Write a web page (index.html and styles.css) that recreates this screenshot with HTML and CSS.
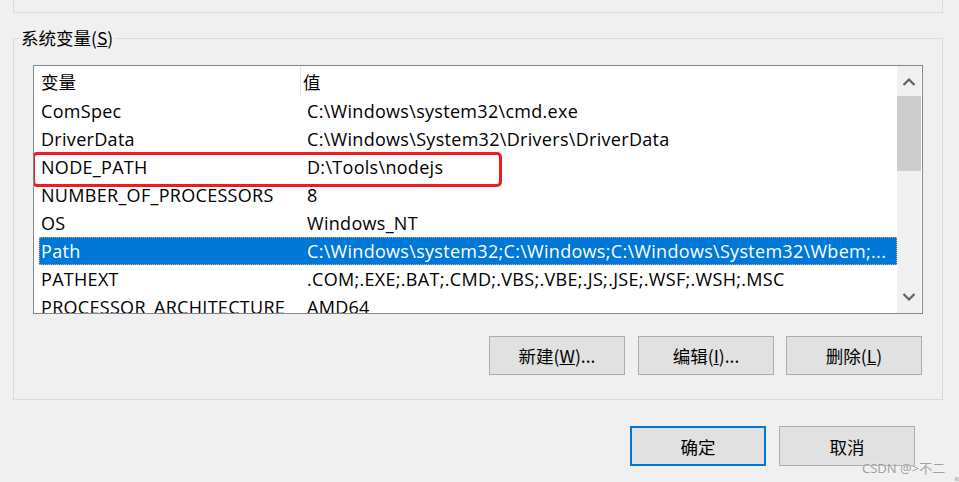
FILE: index.html
```html
<!DOCTYPE html>
<html lang="zh-CN">
<head>
<meta charset="utf-8">
<link rel="stylesheet" href="styles.css">
</head>
<body>
<div class="page">
  <div class="top-group"></div>
  <div class="group">
    <span class="legend">系统变量(<u>S</u>)</span>
    <div class="listbox">
      <div class="list">
        <div class="header">
          <div class="hcell c1">变量</div>
          <div class="hcell c2">值</div>
        </div>
        <div class="rows">
          <div class="row"><span class="c1">ComSpec</span><span class="c2">C:\Windows\system32\cmd.exe</span></div>
          <div class="row"><span class="c1">DriverData</span><span class="c2">C:\Windows\System32\Drivers\DriverData</span></div>
          <div class="row"><span class="c1">NODE_PATH</span><span class="c2">D:\Tools\nodejs</span></div>
          <div class="row"><span class="c1">NUMBER_OF_PROCESSORS</span><span class="c2">8</span></div>
          <div class="row"><span class="c1">OS</span><span class="c2">Windows_NT</span></div>
          <div class="row selected"><span class="c1">Path</span><span class="c2">C:\Windows\system32;C:\Windows;C:\Windows\System32\Wbem;...</span></div>
          <div class="row"><span class="c1">PATHEXT</span><span class="c2">.COM;.EXE;.BAT;.CMD;.VBS;.VBE;.JS;.JSE;.WSF;.WSH;.MSC</span></div>
          <div class="row"><span class="c1">PROCESSOR_ARCHITECTURE</span><span class="c2">AMD64</span></div>
        </div>
        <div class="highlight-box"></div>
      </div>
      <div class="scrollbar">
        <svg class="arrow" width="24" height="30" viewBox="0 0 24 30"><path d="M6.5 19 L12 13.5 L17.5 19" fill="none" stroke="#606060" stroke-width="2.2"/></svg>
        <div class="thumb"></div>
        <div class="track"></div>
        <svg class="arrow" width="24" height="30" viewBox="0 0 24 30"><path d="M6.5 11 L12 16.5 L17.5 11" fill="none" stroke="#606060" stroke-width="2.2"/></svg>
      </div>
    </div>
    <div class="actions">
      <button class="btn">新建(<u>W</u>)...</button>
      <button class="btn">编辑(<u>I</u>)...</button>
      <button class="btn">删除(<u>L</u>)</button>
    </div>
  </div>
  <div class="dialog-actions">
    <button class="btn btn-default">确定</button>
    <button class="btn">取消</button>
  </div>
  <div class="watermark">CSDN @&gt;不二</div>
  <div class="grip"></div>
</div>
</body>
</html>
```
FILE: styles.css
```css
* { box-sizing: border-box; }
html, body { margin: 0; padding: 0; }
body {
  background: #f0f0f0;
  font-family: "Open Sans", "Noto Sans CJK SC", sans-serif;
  font-size: 18px;
  color: #000;
}
.page {
  position: relative;
  width: 959px;
  height: 482px;
  overflow: hidden;
}
.top-group {
  margin-left: 13px;
  width: 930px;
  height: 13px;
  border: 1px solid #dcdcdc;
  border-top: none;
}
.group {
  position: relative;
  margin: 25px 0 0 13px;
  width: 930px;
  height: 362px;
  border: 1px solid #dcdcdc;
  padding: 26px 0 0 19px;
}
.legend {
  position: absolute;
  left: 5px;
  top: -13px;
  padding: 0 2px;
  background: #f0f0f0;
  line-height: 24px;
  font-family: "Noto Sans CJK SC", sans-serif;
  font-size: 17.5px;
}
.listbox {
  width: 890px;
  height: 249px;
  border: 1px solid #828790;
  background: #fff;
  display: flex;
}
.list {
  position: relative;
  flex: 1;
  overflow: hidden;
}
.header {
  display: flex;
  height: 31px;
  align-items: stretch;
  padding-left: 5px;
}
.hcell {
  display: flex;
  align-items: center;
  font-family: "Noto Sans CJK SC", sans-serif;
  font-size: 17.5px;
  line-height: 1;
}
.header .c1 {
  width: 262px;
  padding-left: 2px;
  border-right: 1px solid #e5e5e5;
}
.header .c2 { padding-left: 2px; }
.rows { padding-left: 5px; }
.row {
  display: flex;
  align-items: center;
  height: 28px;
  white-space: nowrap;
  border: 1px dotted transparent;
  letter-spacing: 0.3px;
}
.row .c1 { width: 267px; padding-left: 1px; }
.row .c2 { padding-left: 0; }
.row.selected {
  background: #0078d7;
  color: #fff;
  border-color: #e0a060;
}
.highlight-box {
  position: absolute;
  left: -2px;
  top: 86px;
  width: 470px;
  height: 35px;
  border: 3px solid #f21b1b;
  border-radius: 5px;
}
.scrollbar {
  width: 24px;
  margin-right: 1px;
  background: #f0f0f0;
  display: flex;
  flex-direction: column;
}
.arrow { display: block; flex: none; }
.thumb {
  height: 75px;
  background: #cdcdcd;
  flex: none;
}
.track { flex: 1; }
.actions {
  display: flex;
  gap: 12px;
  margin: 22px 0 0 456px;
}
.btn {
  width: 136px;
  height: 39px;
  background: #e1e1e1;
  border: 1px solid #adadad;
  font-family: "Noto Sans CJK SC", sans-serif;
  font-size: 17.5px;
  color: #000;
  padding: 0;
  margin: 0;
}
.actions .btn:nth-child(2) { margin-left: 1px; }
.dialog-actions {
  display: flex;
  gap: 13px;
  margin: 26px 0 0 630px;
}
.dialog-actions .btn { height: 40px; }
.btn-default { border: 2px solid #0078d7; }
.watermark {
  position: absolute;
  left: 862px;
  top: 458px;
  font-family: "Noto Sans", "Noto Sans CJK SC", sans-serif;
  font-size: 13px;
  color: #a0a0a0;
  text-shadow: 0 0 2px #fff;
}
.grip {
  position: absolute;
  right: 0;
  bottom: 1px;
  width: 4px;
  height: 4px;
  background: #c8c8c8;
}
```
